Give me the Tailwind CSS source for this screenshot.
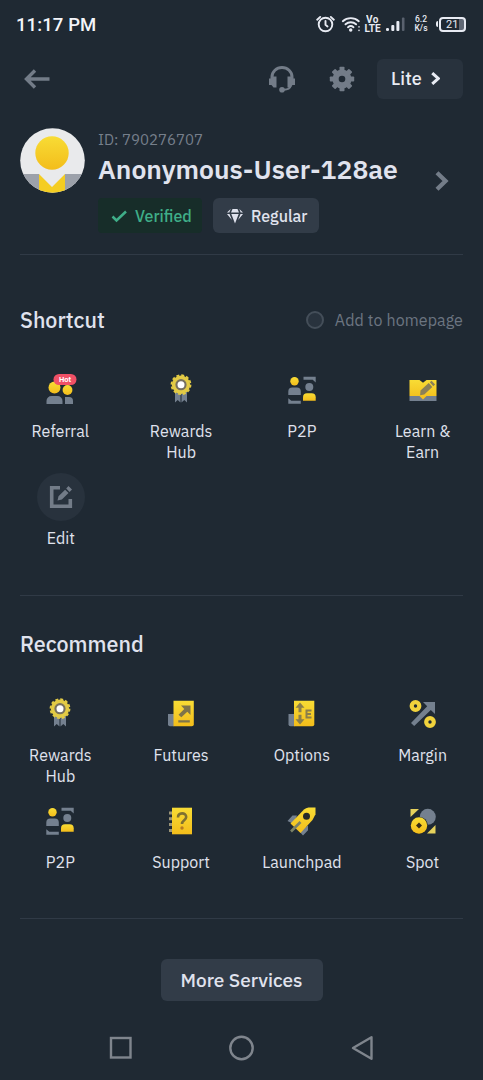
<!DOCTYPE html>
<html lang="en">
<head>
<meta charset="utf-8">
<meta name="viewport" content="width=device-width, initial-scale=1">
<title>Account</title>
<script src="https://cdn.jsdelivr.net/npm/@tailwindcss/browser@4"></script>
</head>
<body class="bg-[#1f2933] font-['IBM_Plex_Sans',Roboto,sans-serif] text-[#e0e3ee]">
<svg class="absolute h-0 w-0">
  <defs>
    <linearGradient id="gold" x1="0" y1="0" x2="0" y2="1"><stop offset="0" stop-color="#f8dc35"/><stop offset="1" stop-color="#f3bd1b"/></linearGradient>
  </defs>
  <symbol id="rewards" viewBox="0 0 32 32">
    <path d="M10 17h5.500v11.500l-2.800-2.500-2.700 2.500zM16.500 17H22v11.500l-2.700-2.500-2.800 2.500z" fill="#74808f"/>
    <circle cx="16" cy="10.700" r="9.200" fill="#e3cb45"/>
    <circle cx="16" cy="10.700" r="9.500" fill="none" stroke="#e3cb45" stroke-width="1.800" stroke-dasharray="2.900 2.074"/>
    <circle cx="16" cy="10.700" r="5.600" fill="#77705f"/>
    <circle cx="16" cy="10.700" r="3.500" fill="#fff"/>
  </symbol>
  <symbol id="p2p" viewBox="0 0 32 32">
    <circle cx="8.500" cy="7.300" r="4.200" fill="url(#gold)"/>
    <path d="M2.300 21V17.500a4 4 0 0 1 4-4h4.500a4 4 0 0 1 4 4V21z" fill="#74808f"/>
    <circle cx="23.300" cy="13" r="4" fill="#74808f"/>
    <path d="M17 26.700v-3.500a4 4 0 0 1 4-4h4.700a4 4 0 0 1 4 4v3.500z" fill="url(#gold)"/>
    <path d="M17.500 2.800h12.200v5.700l-3-2.700h-9.200zM2.300 29.700v-5.400l3 2.500h9.500v2.900z" fill="#74808f"/>
  </symbol>
</svg>
<div class="flex h-[1080px] w-[483px] flex-col overflow-hidden">
  <div class="flex h-12 items-center justify-between pl-4 pr-[17px]">
    <div class="pt-[2px] font-[Roboto] text-[18.500px] font-medium leading-none tracking-[0.100px] text-[#f4f5fa]">11:17 PM</div>
    <div class="flex items-center text-[#e8ebf3]">
      <svg class="mr-[6px] h-[18px] w-[19px]" viewBox="0 0 19 18" fill="none" stroke="currentColor" stroke-width="1.900" stroke-linecap="round"><circle cx="9.500" cy="9.500" r="6.800"/><path d="M9.500 6v3.800l2 1.600M1.200 4.700l3-2.800M17.800 4.700l-3-2.800"/></svg>
      <svg class="mr-[3px] h-[18px] w-[20px]" viewBox="0 0 19 18" fill="none" stroke="currentColor" stroke-width="1.900" stroke-linecap="round"><path d="M1.300 6.200a12 12 0 0 1 16 0M4 9.300a8 8 0 0 1 10.600 0M6.500 12.200a4.300 4.300 0 0 1 5.500 0"/><circle cx="9.200" cy="15" r=".8" fill="currentColor"/><path d="M17.500 11.800v.2M17.500 15.300v.2" stroke-width="1.500"/></svg>
      <div class="mr-[5px] flex w-[17px] flex-col items-center font-[Roboto] text-[10px] font-bold leading-[9.500px]"><span class="block h-[9.500px] overflow-hidden tracking-[0.400px]">Vo</span><span class="block h-[9.500px] overflow-hidden">LTE</span></div>
      <svg class="mr-[9px] h-[16px] w-[19px]" viewBox="0 0 19 16" fill="currentColor"><rect y="12" width="3" height="3" rx="1.300"/><rect x="5.300" y="9" width="3" height="6" rx="1"/><rect x="10.400" y="5" width="3" height="10" rx="1"/><rect x="15.900" y="1.500" width="2.600" height="13.500" rx="1" fill="#59616e"/></svg>
      <div class="mr-2 flex w-[14px] flex-col items-center font-[Roboto] text-[8.500px] font-medium leading-[9.500px]"><span>6.2</span><span>K/s</span></div>
      <div class="flex items-center">
        <div class="mr-px h-[6px] w-[2px] rounded-l bg-[#e8ebf3]"></div>
        <div class="flex h-[15px] w-[27px] items-center rounded-[4px] border-2 border-[#e8ebf3] bg-[linear-gradient(90deg,#1f2933_78%,#606875_78%)] pl-[5px] font-[Roboto] text-[11px] leading-none">21</div>
      </div>
    </div>
  </div>
  <div class="flex h-[61px] items-center pl-6 pr-5 text-[#737c88]">
    <svg class="h-5 w-[26px]" viewBox="0 0 26 20" fill="none" stroke="currentColor" stroke-width="3.400"><path d="M25.500 10H3M11 1.500L2.500 10l8.500 8.500"/></svg>
    <svg class="ml-[219px] h-7 w-[26px]" viewBox="0 0 26 28" fill="currentColor"><path d="M3 16v-4a10 9.500 0 0 1 20 0v4" fill="none" stroke="currentColor" stroke-width="3"/><path d="M0 13.500h2l2-2h3.500v11H4.500L2.500 20H0zM26 13.500h-2l-2-2h-3.500v11h3l2-2.500H26z"/><path d="M22 20.500c-1 3-4 4.200-7 4.200" fill="none" stroke="currentColor" stroke-width="2"/><circle cx="13" cy="24.800" r="2.800"/></svg>
    <svg class="ml-[34px] h-[26px] w-[26px]" viewBox="0 0 26 26"><g fill="currentColor"><circle cx="13" cy="13" r="9.500"/><rect x="10.500" y=".8" width="5" height="24.400" rx=".8"/><rect x="10.500" y=".8" width="5" height="24.400" rx=".8" transform="rotate(45 13 13)"/><rect x="10.500" y=".8" width="5" height="24.400" rx=".8" transform="rotate(90 13 13)"/><rect x="10.500" y=".8" width="5" height="24.400" rx=".8" transform="rotate(135 13 13)"/></g><circle cx="13" cy="13" r="3.300" fill="#1f2933"/></svg>
    <div class="ml-[22px] flex h-10 w-[86px] items-center rounded-md bg-[#28323d] pl-[14px] text-[18px] font-medium tracking-[0.100px] text-[#e8ebf3]">Lite
      <svg class="ml-[9px] h-[13px] w-[9px]" viewBox="0 0 8 12" fill="none" stroke="currentColor" stroke-width="2.800"><path d="M1 1l5.500 5L1 11"/></svg>
    </div>
  </div>
  <div class="mx-5 flex h-[146px] border-b border-[#303a46] pt-[18px]">
    <svg class="mt-px h-[65px] w-[65px] shrink-0" viewBox="0 0 65 65"><clipPath id="round"><circle cx="32.500" cy="32.500" r="32.300"/></clipPath><g clip-path="url(#round)"><path fill="#e9eaec" d="M0 0h65v65H0z"/><path fill="#9ca1aa" d="M0 46h19v19H0zM45 46h20v19H45z"/><path fill="#f4cd22" d="M19 46l13 13 13-13v19H19z"/><path fill="#e9eaec" d="M21 46h22L32 58z"/><circle cx="32" cy="25" r="16.700" fill="url(#gold)"/></g></svg>
    <div class="ml-[13px] flex w-[330px] flex-col">
      <div class="h-[22px] pt-[2px] text-[15px] leading-[22px] text-[#767f8b]">ID: 790276707</div>
      <div class="h-[38px] whitespace-nowrap text-[26.500px] font-semibold leading-[41px]">Anonymous-User-128ae</div>
      <div class="mt-[11px] flex gap-[11px] text-[16px] font-medium">
        <div class="flex h-[35px] w-[104px] items-center rounded bg-[#172d29] pl-[13px] text-[#3fae88]"><svg class="mr-[8px] h-4 w-4" viewBox="0 0 16 16" fill="none" stroke="currentColor" stroke-width="2.500"><path d="M1.500 8.500l4 4L15 3.500"/></svg>Verified</div>
        <div class="flex h-[35px] w-[106px] items-center rounded-md bg-[#323c48] pl-[14px]"><svg class="mr-[8px] h-4 w-4" viewBox="0 0 16 16" fill="currentColor"><path d="M5.500 1h5L12 4.500H4zM4.300 6h7.400L8 15.500zM3.700 1L2.300 4.500H0zM12.300 1L16 4.500h-2.300zM0 6h2.500l2.400 6zM16 6h-2.500l-2.400 6z"/></svg>Regular</div>
      </div>
    </div>
    <svg class="ml-[7px] mt-[44px] h-5 w-[14px]" viewBox="0 0 14 20" fill="none" stroke="#737c88" stroke-width="4.300"><path d="M2 1.800l8.500 8.200L2 18.200"/></svg>
  </div>
  <section class="relative h-[341px] pt-[49px]">
    <div class="flex h-8 items-center justify-between px-5">
      <h2 class="text-[21.500px] font-medium">Shortcut</h2>
      <div class="flex items-center text-[16px] tracking-[0.100px] text-[#6c7581]"><span class="mr-[11px] h-[18px] w-[18px] rounded-full border-2 border-[#444e59] bg-[#29333e]"></span>Add to homepage</div>
    </div>
    <div class="mt-[30px] grid grid-cols-4 text-center text-[16px] leading-[21px] tracking-[0.050px]">
      <div class="flex h-[107px] flex-col items-center"><div class="flex h-12 items-center"><svg class="h-8 w-8 overflow-visible" viewBox="0 0 32 32"><circle cx="10.500" cy="13.500" r="6" fill="url(#gold)"/><circle cx="23.500" cy="16" r="4.900" fill="url(#gold)"/><path d="M2.500 30v-3a5 5 0 0 1 5-5h6a5 5 0 0 1 5 5v3zM21 30v-7h4a4 4 0 0 1 4 4v3z" fill="#74808f"/><rect x="9.500" y="0" width="23" height="11" rx="5.500" fill="#f05066"/><text x="21" y="8.200" text-anchor="middle" font-family="Roboto" font-size="7.500" font-weight="700" letter-spacing="0" fill="#fff">Hot</text></svg></div><span class="mt-[7px]">Referral</span></div>
      <div class="flex h-[107px] flex-col items-center"><div class="flex h-12 items-center"><svg class="h-8 w-8"><use href="#rewards"/></svg></div><span class="mt-[7px]">Rewards<br>Hub</span></div>
      <div class="flex h-[107px] flex-col items-center"><div class="flex h-12 items-center"><svg class="h-8 w-8"><use href="#p2p"/></svg></div><span class="mt-[7px]">P2P</span></div>
      <div class="flex h-[107px] flex-col items-center"><div class="flex h-12 items-center"><svg class="h-8 w-8" viewBox="0 0 32 32"><path d="M2.500 22h27v5h-27z" fill="#74808f"/><path d="M2.500 6h10l3.500 2.800L19.500 6h10v16h-10L16 25.500 12.500 22h-10z" fill="url(#gold)"/><path d="M13.500 16.500l8.200-7.400 3.600 4-8 7.300-4.200.8zM22.800 8.200l1.800-1.500 3.500 3.900-1.800 1.600z" fill="#8b8057"/></svg></div><span class="mt-[7px]">Learn &amp;<br>Earn</span></div>
      <div class="flex h-[107px] flex-col items-center pl-px"><div class="flex h-12 w-12 items-center justify-center rounded-full bg-[#28323d]"><svg class="h-6 w-6" viewBox="0 0 24 24" fill="none"><path d="M11 2.700H2.700v18.600h18.600V14" stroke="#737c88" stroke-width="3.600"/><path d="M8.500 15.500l1-4.300 6.600-6.500 3.400 3.400-6.600 6.500zM17.200 3.600L19.500 1 23 4.600l-2.400 2.500z" fill="#737c88"/></svg></div><span class="mt-[7px]">Edit</span></div>
    </div>
    <div class="absolute inset-x-5 bottom-0 h-px bg-[#303a46]"></div>
  </section>
  <section class="relative h-[323px] pt-[32px]">
    <h2 class="px-5 text-[21.500px] font-medium leading-8">Recommend</h2>
    <div class="mt-[30px] grid grid-cols-4 text-center text-[16px] leading-[21px] tracking-[0.050px]">
      <div class="flex h-[107px] flex-col items-center"><div class="flex h-12 items-center"><svg class="h-8 w-8"><use href="#rewards"/></svg></div><span class="mt-[7px]">Rewards<br>Hub</span></div>
      <div class="flex h-[107px] flex-col items-center"><div class="flex h-12 items-center"><svg class="h-8 w-8" viewBox="0 0 32 32"><path d="M3 16h6v12.200H5a2 2 0 0 1-2-2z" fill="#74808f"/><path d="M8.500 2.700h20.300v23.500a2 2 0 0 1-2 2H8.500z" fill="url(#gold)"/><path d="M16 7.500h9.500V17l-3.200-3.200-6 5.500-2.800-2.600 5.800-5.700zM13.300 22.200h11.500v2.300H13.300z" fill="#7f7449"/></svg></div><span class="mt-[7px]">Futures</span></div>
      <div class="flex h-[107px] flex-col items-center"><div class="flex h-12 items-center"><svg class="h-8 w-8" viewBox="0 0 32 32"><path d="M2.500 16h6v12.200h-4a2 2 0 0 1-2-2z" fill="#74808f"/><path d="M8 2.700h20.300v23.500a2 2 0 0 1-2 2H8z" fill="url(#gold)"/><g fill="#8b7f4b"><path d="M14 4.500l4.500 5.300h-3v4.400h-3V9.800h-3zM14 26.500l4.500-5.300h-3v-4.400h-3v4.400h-3z"/><path d="M19.500 11.500h6V13.500h-4v1.600h3.500v1.900h-3.500v1.600h4v2h-6z"/></g></svg></div><span class="mt-[7px]">Options</span></div>
      <div class="flex h-[107px] flex-col items-center"><div class="flex h-12 items-center"><svg class="h-8 w-8" viewBox="0 0 32 32"><path d="M16 4h12v12l-4.200-4L7.200 28 4 25 20.200 8.300z" fill="#74808f"/><circle cx="8.500" cy="8" r="3.800" fill="none" stroke="#f0d23c" stroke-width="4.200"/><circle cx="23" cy="24" r="3.800" fill="none" stroke="#f0d23c" stroke-width="4.200"/></svg></div><span class="mt-[7px]">Margin</span></div>
      <div class="flex h-[107px] flex-col items-center"><div class="flex h-12 items-center"><svg class="h-8 w-8"><use href="#p2p"/></svg></div><span class="mt-[7px]">P2P</span></div>
      <div class="flex h-[107px] flex-col items-center"><div class="flex h-12 items-center"><svg class="h-8 w-8" viewBox="0 0 32 32"><path d="M4 6.500h4v3H4zM4 12.300h4v3H4zM4 18.100h4v3H4zM4 23.900h4v3H4z" fill="#9c9578"/><path d="M7 2.700h20v26.600H7z" fill="url(#gold)"/><path d="M13 12.500c0-5.500 8.200-5.300 8.200-.5 0 3.400-4.200 3.300-4.200 7" fill="none" stroke="#7f7130" stroke-width="2.600"/><circle cx="17" cy="23" r="1.700" fill="#b77b20"/></svg></div><span class="mt-[7px]">Support</span></div>
      <div class="flex h-[107px] flex-col items-center"><div class="flex h-12 items-center"><svg class="h-8 w-8" viewBox="0 0 32 32"><path d="M11 10.500H6.500L1.500 16l6 3zM22 20.500v4.800L17 30.500l-4-4.500z" fill="#74808f"/><path d="M29.500 2.500v6.800L26.500 15 14.500 28 4.500 18.500 18 4.500a8 8 0 0 1 4.500-2z" fill="url(#gold)"/><circle cx="20.500" cy="11.300" r="3.500" fill="#252a29"/><path d="M5 26.500l9.500-9.500" stroke="#7b8268" stroke-width="2.600"/></svg></div><span class="mt-[7px]">Launchpad</span></div>
      <div class="flex h-[107px] flex-col items-center"><div class="flex h-12 items-center"><svg class="h-8 w-8" viewBox="0 0 32 32"><path d="M3.500 4H12l-8.500 8z" fill="#e6d15c"/><path d="M28.500 20v8.500H20z" fill="#e6d15c"/><circle cx="20.800" cy="11.800" r="8" fill="#74808f"/><circle cx="12" cy="20.500" r="8.800" fill="#20262b"/><circle cx="12" cy="20.500" r="8.200" fill="url(#gold)"/><path d="M12 17.500l3 3-3 3-3-3z" fill="#352b16"/></svg></div><span class="mt-[7px]">Spot</span></div>
    </div>
    <div class="absolute inset-x-5 bottom-0 h-px bg-[#303a46]"></div>
  </section>
  <div class="flex justify-center pt-[40px]">
    <button class="h-[42px] w-[162px] rounded-md bg-[#323c48] text-[19px] font-medium">More Services</button>
  </div>
  <div class="mt-[35px] flex justify-between px-[109px] text-[#7f858d]">
    <svg class="h-6 w-6" viewBox="0 0 24 24" fill="none" stroke="currentColor" stroke-width="2.400"><rect x="2" y="2" width="19.500" height="19.500"/></svg>
    <svg class="h-6 w-6 overflow-visible" viewBox="0 0 24 24" fill="none" stroke="currentColor" stroke-width="2.400"><circle cx="11.500" cy="12" r="11.200"/></svg>
    <svg class="h-6 w-6 overflow-visible" viewBox="0 0 24 24" fill="none" stroke="currentColor" stroke-width="2.400" stroke-linejoin="round"><path d="M21.500 1.200v21.500L3 12z"/></svg>
  </div>
</div>
</body>
</html>
